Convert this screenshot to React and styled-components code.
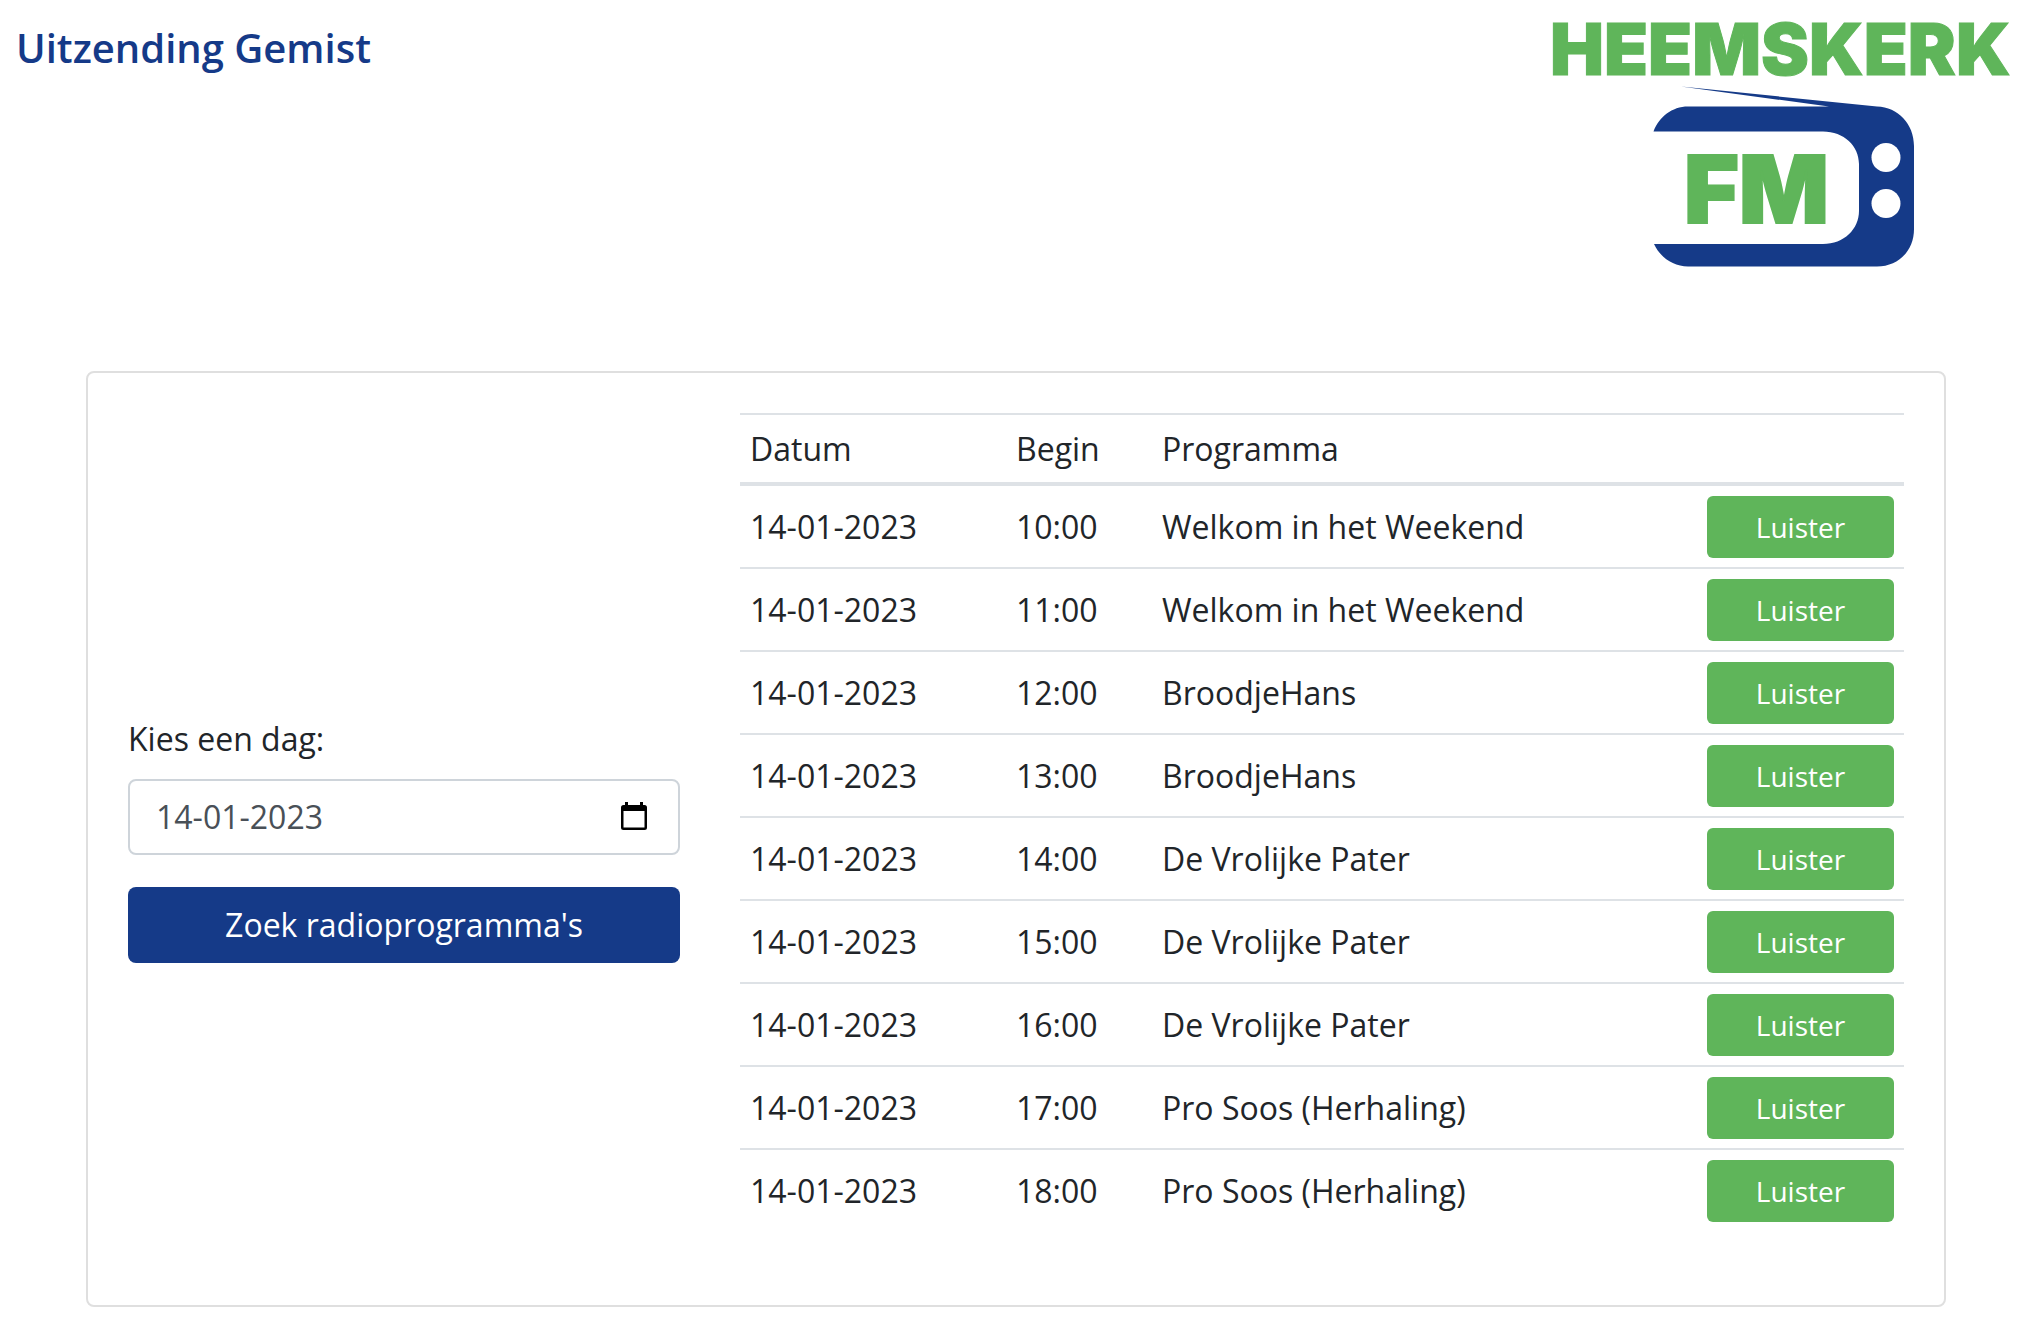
import React, { useState } from "react";
import styled, { createGlobalStyle } from "styled-components";

const blue = "#153a88";
const green = "#5fb55a";
const line = "#dee2e6";

const GlobalStyle = createGlobalStyle`
  *, *::before, *::after { box-sizing: border-box; }
  body {
    margin: 0;
    background: #fff;
    color: #212529;
    font-family: "Open Sans", "Noto Sans", sans-serif;
    font-size: 32px;
    line-height: 48px;
  }
  button, input { font: inherit; }
`;

const Header = styled.header`
  display: flex;
  justify-content: space-between;
  align-items: flex-start;
  padding: 0 20px 0 16px;
`;

const Title = styled.h1`
  margin: 24px 0 0;
  color: ${blue};
  font-size: 40px;
  font-weight: 600;
  line-height: 48px;
`;

const Logo = styled.svg`
  display: block;
  flex: none;
  width: 482px;
  height: 291px;
`;

const Main = styled.main`
  padding: 80px 96px 8px 86px;
`;

const Card = styled.section`
  display: grid;
  grid-template-columns: repeat(12, minmax(0, 1fr));
  column-gap: 60px;
  align-items: center;
  padding: 40px;
  border: 2px solid #dfdfdf;
  border-radius: 8px;
`;

const SearchForm = styled.form`
  grid-column: span 4;
  display: flex;
  flex-direction: column;
`;

const Label = styled.label`
  margin-bottom: 16px;
`;

const DateField = styled.div`
  display: flex;
  align-items: center;
  height: 76px;
  margin-bottom: 32px;
  padding: 0 28px 0 26px;
  border: 2px solid #ced4da;
  border-radius: 8px;
`;

const DateInput = styled.input`
  flex: 1;
  min-width: 0;
  padding: 0;
  border: 0;
  outline: 0;
  background: transparent;
  color: #495057;
`;

const PickerButton = styled.button`
  display: flex;
  padding: 0;
  border: 0;
  background: transparent;
  color: #000;
  cursor: pointer;

  svg { width: 32px; height: 32px; }
`;

const SearchButton = styled.button`
  height: 76px;
  padding: 0 24px;
  border: 0;
  border-radius: 8px;
  background: ${blue};
  color: #fff;
  cursor: pointer;
`;

const Table = styled.table`
  grid-column: span 8;
  width: 100%;
  margin-bottom: 34px;
  border-collapse: separate;
  border-spacing: 0;
  table-layout: fixed;

  tbody tr + tr td { border-top: 2px solid ${line}; }
`;

const Col = styled.col`
  width: ${(p) => p.$width};
`;

const HeadCell = styled.th`
  padding: 10px 10px 9px;
  border-top: 2px solid ${line};
  border-bottom: 4px solid ${line};
  font-weight: 400;
  text-align: left;
`;

const Cell = styled.td`
  padding: 10px 10px 9px;
`;

const ListenButton = styled.button`
  display: block;
  width: 100%;
  height: 62px;
  padding: 0 16px;
  border: 0;
  border-radius: 6px;
  background: ${green};
  color: #fff;
  font-size: 28px;
  line-height: 42px;
  cursor: pointer;
`;

const programmes = [
  ["10:00", "Welkom in het Weekend"],
  ["11:00", "Welkom in het Weekend"],
  ["12:00", "BroodjeHans"],
  ["13:00", "BroodjeHans"],
  ["14:00", "De Vrolijke Pater"],
  ["15:00", "De Vrolijke Pater"],
  ["16:00", "De Vrolijke Pater"],
  ["17:00", "Pro Soos (Herhaling)"],
  ["18:00", "Pro Soos (Herhaling)"],
];

const LogoText = styled.text`
  fill: ${green};
  stroke: ${green};
  stroke-width: ${(p) => p.$stroke};
  font-family: "Inter", "Liberation Sans", sans-serif;
  font-size: ${(p) => p.$size};
  font-weight: 900;
`;

function StationLogo() {
  return (
    <Logo viewBox="0 0 482 291" role="img" aria-label="Heemskerk FM">
      <LogoText x="10" y="74.500" $size="72px" $stroke="1px">HEEMSKERK</LogoText>
      <path
        fill={blue}
        d="M141 86.5 L337 106.5 C358 107 374 124 374 146 V229 C374 251 358 266.5 337 266.5 H148 C133 266.5 120 257 114 244 H283 C304 244 319 229 319 211 V164 C319 146 304 131.500 283 131.500 H113.500 C119 117 132 106.500 148 106.500 H289 Z"
      />
      <circle cx="346" cy="157.500" r="14.500" fill="#fff" />
      <circle cx="346" cy="203.500" r="14.500" fill="#fff" />
      <LogoText x="144" y="222.500" $size="94px" $stroke="2px">FM</LogoText>
    </Logo>
  );
}

function CalendarIcon() {
  return (
    <svg viewBox="0 0 32 32" aria-hidden="true">
      <path
        fill="currentColor"
        fillRule="evenodd"
        d="M7 1h3v3h12V1h3v3h1.500A2.500 2.500 0 0 1 29 6.500v20a2.500 2.500 0 0 1-2.500 2.500h-21A2.500 2.500 0 0 1 3 26.500v-20A2.500 2.500 0 0 1 5.500 4H7zM5.500 10v16.500h21V10z"
      />
    </svg>
  );
}

export default function App() {
  const [day, setDay] = useState("14-01-2023");
  return (
    <>
      <GlobalStyle />
      <Header>
        <Title>Uitzending Gemist</Title>
        <StationLogo />
      </Header>
      <Main>
        <Card>
          <SearchForm onSubmit={(e) => e.preventDefault()}>
            <Label htmlFor="day">Kies een dag:</Label>
            <DateField>
              <DateInput
                id="day"
                type="text"
                inputMode="numeric"
                value={day}
                onChange={(e) => setDay(e.target.value)}
              />
              <PickerButton type="button" aria-label="Open kalender">
                <CalendarIcon />
              </PickerButton>
            </DateField>
            <SearchButton type="submit">Zoek radioprogramma's</SearchButton>
          </SearchForm>
          <Table>
            <colgroup>
              <Col $width="266px" />
              <Col $width="146px" />
              <Col $width="auto" />
              <Col $width="207px" />
            </colgroup>
            <thead>
              <tr>
                <HeadCell scope="col">Datum</HeadCell>
                <HeadCell scope="col">Begin</HeadCell>
                <HeadCell scope="col">Programma</HeadCell>
                <HeadCell as="td" />
              </tr>
            </thead>
            <tbody>
              {programmes.map(([start, name]) => (
                <tr key={start}>
                  <Cell>14-01-2023</Cell>
                  <Cell>{start}</Cell>
                  <Cell>{name}</Cell>
                  <Cell>
                    <ListenButton type="button">Luister</ListenButton>
                  </Cell>
                </tr>
              ))}
            </tbody>
          </Table>
        </Card>
      </Main>
    </>
  );
}
